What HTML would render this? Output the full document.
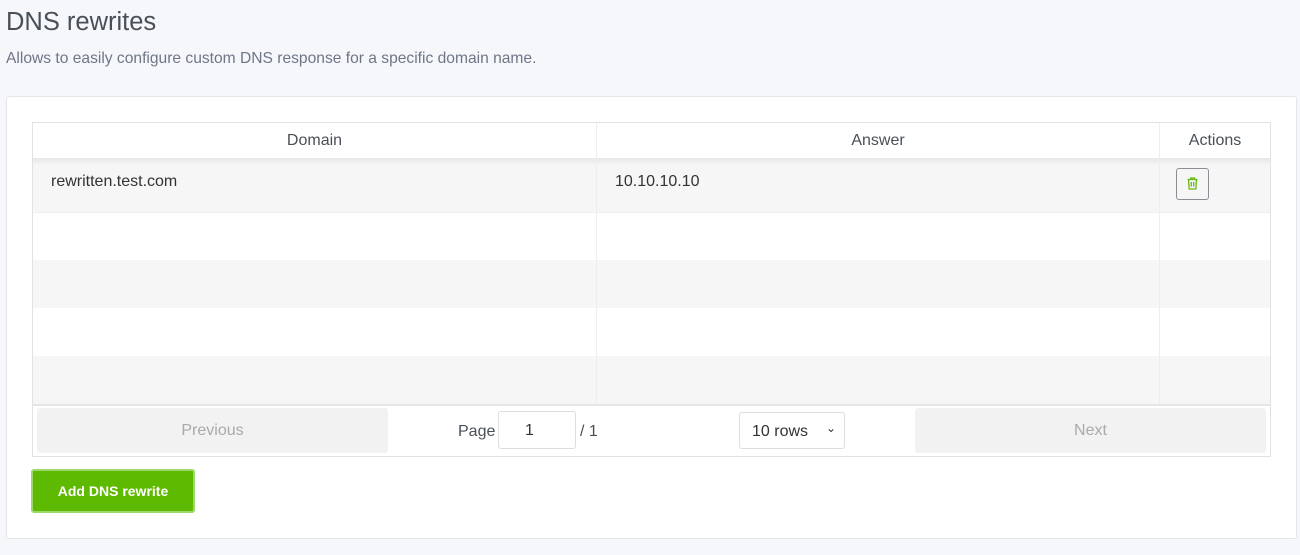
<!DOCTYPE html>
<html><head><style>
*{box-sizing:border-box;margin:0;padding:0}
body{width:1300px;height:555px;background:#f5f7fb;font-family:"Liberation Sans",sans-serif;color:#495057;position:relative;overflow:hidden}
.a{position:absolute}
h1{position:absolute;left:6px;top:8px;font-size:25.5px;font-weight:400;color:#495057}
.sub{left:6px;top:49px;font-size:15.6px;color:#6e7687}
.card{left:6px;top:96px;width:1291px;height:443px;background:#fff;border:1px solid #e4e6ea;border-radius:3px}
.tbl{left:32px;top:122px;width:1239px;height:335px;border:1px solid #e2e2e2;background:#fff}
.row{position:absolute;left:0;width:1237px}
.g{background:#f6f6f6}
.vl{position:absolute;top:0;width:1px;height:281px;background:#eee}
.th{position:absolute;top:9px;font-size:16px;text-align:center}
.td{position:absolute;font-size:16px;color:#333}
.btn{position:absolute;background:#f2f2f2;border-radius:3px;color:#aaa;font-size:16px;text-align:center;line-height:45px}
</style></head><body>
<h1>DNS rewrites</h1>
<div class="a sub" style="top:50px">Allows to easily configure custom DNS response for a specific domain name.</div>
<div class="a card"></div>
<div class="a tbl">
 <div class="row g" style="top:35px;height:54px"></div>
 <div class="row" style="top:35px;height:8px;background:linear-gradient(rgba(0,0,0,.06),rgba(0,0,0,0))"></div>
 <div class="row" style="top:89px;height:1px;background:#eee"></div>
 <div class="row g" style="top:137px;height:48px"></div>
 <div class="row g" style="top:233px;height:48px"></div>
 <div class="row" style="top:281px;height:2px;background:#e6e6e6"></div>
 <div class="vl" style="left:563px"></div>
 <div class="vl" style="left:1126px"></div>
 <div class="th" style="left:0;width:563px">Domain</div>
 <div class="th" style="left:564px;width:562px">Answer</div>
 <div class="th" style="left:1127px;width:110px">Actions</div>
 <div class="td" style="left:18px;top:50px">rewritten.test.com</div>
 <div class="td" style="left:582px;top:50px">10.10.10.10</div>
 <div style="position:absolute;left:1143px;top:45px;width:33px;height:32px;border:1px solid #8a8f96;border-radius:3px">
  <svg width="31" height="30" viewBox="0 0 31 30"><g fill="none" stroke="#66b90e" stroke-width="1.3"><path d="M10.5 10.5h10M13.5 10.5v-1.5h4v1.5M11.5 10.5l.7 9.5h6.6l.7-9.5M14.3 13v4.5M16.7 13v4.5"/></g></svg>
 </div>
 <div class="btn" style="left:4px;top:285px;width:351px">Previous</div>
 <div class="btn" style="left:882px;top:285px;width:351px">Next</div>
 <div class="td" style="left:425px;top:300px;color:#495057">Page</div>
 <div style="position:absolute;left:465px;top:288px;width:78px;height:38px;border:1px solid #ddd;border-radius:3px;font-size:16px;color:#333;padding:10px 0 0 26px">1</div>
 <div class="td" style="left:547px;top:300px;color:#495057">/ 1</div>
 <div style="position:absolute;left:706px;top:289px;width:106px;height:37px;border:1px solid #ddd;border-radius:3px;font-size:16px;color:#333;padding:10px 0 0 12px">10 rows<span style="position:absolute;right:8px;top:8px;font-size:12px">&#8964;</span></div>
</div>
<div class="a" style="left:31px;top:469px;width:164px;height:44px;background:#5eba00;border:2px solid #9ed86a;border-radius:3px;color:#fff;font-weight:700;font-size:14px;text-align:center;line-height:40px">Add DNS rewrite</div>
</body></html>
